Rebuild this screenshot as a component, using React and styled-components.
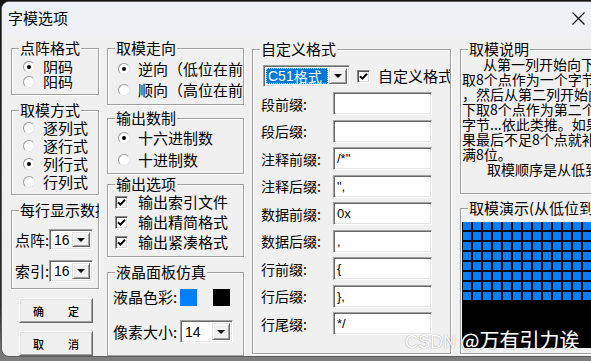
import React from 'react'
import styled, { createGlobalStyle } from 'styled-components'

const GlobalStyle = createGlobalStyle`
  html, body {
    margin: 0;
    padding: 0;
  }
  body {
    background: #1c1c1c;
    font-family: "Noto Sans CJK SC", "Liberation Sans", sans-serif;
    color: #000;
  }
`

const Screen = styled.div`
  position: relative;
  width: 591px;
  height: 361px;
  overflow: hidden;
  box-sizing: border-box;
  padding: 1px 0 0 1px;
  background: linear-gradient(#151515, #2e2e2e 85%, #7d7d7d 99%);
`

const Dialog = styled.div`
  width: 607px;
  height: 356px;
  box-sizing: border-box;
  border: 1px solid #5c5c5c;
  border-radius: 8px;
  background: #f0f0f0;
  overflow: hidden;
  display: flex;
  flex-direction: column;
`

const TitleBar = styled.div`
  height: 31px;
  flex: none;
  display: flex;
  align-items: center;
  padding-left: 6px;
  background: #eef2f7;
  font-size: 15px;
  line-height: 16px;
`

const Caption = styled.div`
  flex: 1;
`

const CloseButton = styled.div`
  width: 58px;
  height: 100%;
  display: flex;
  align-items: center;
  justify-content: center;
  padding-top: 2px;
  box-sizing: border-box;
`

const Body = styled.div`
  flex: 1;
  display: flex;
  padding-left: 9px;
`

const Column = styled.div`
  flex: none;
  width: ${p => p.$w}px;
  margin-left: ${p => p.$ml || 0}px;
  display: flex;
  flex-direction: column;
`

const Group = styled.div`
  box-sizing: border-box;
  flex: none;
  height: ${p => p.$h}px;
  margin-top: ${p => p.$mt}px;
  border: 1px solid #a0a0a0;
  box-shadow: inset 1px 1px 0 #fff, 1px 1px 0 #fff;
`

const Legend = styled.div`
  width: max-content;
  max-width: calc(100% - 8px);
  height: 16px;
  margin: -9px 0 0 7px;
  padding: 0 1px;
  background: #f0f0f0;
  font-size: 15px;
  line-height: 16px;
  white-space: nowrap;
  overflow: hidden;
`

const Options = styled.div`
  flex: none;
  width: ${p => (p.$w ? `${p.$w}px` : 'auto')};
  padding: ${p => p.$pt || 0}px 0 0 ${p => p.$pl}px;
  overflow: hidden;
`

const Option = styled.div`
  display: flex;
  align-items: center;
  gap: ${p => p.$gap || 8}px;
  height: ${p => p.$h}px;
  font-size: 15px;
  line-height: ${p => Math.min(p.$h, 16)}px;
  white-space: nowrap;
  overflow: hidden;
`

const RadioMark = styled.span`
  flex: none;
  width: 12px;
  height: 12px;
  box-sizing: border-box;
  border-radius: 50%;
  border: 1px solid;
  border-color: #9a9a9a #e6e6e6 #e6e6e6 #9a9a9a;
  background: #fff;
  display: flex;
  align-items: center;
  justify-content: center;

  &::after {
    content: '';
    width: 4px;
    height: 4px;
    border-radius: 50%;
    background: ${p => (p.$on ? '#000' : 'transparent')};
  }
`

const CheckMark = styled.span`
  flex: none;
  width: 13px;
  height: 13px;
  box-sizing: border-box;
  border: 1px solid;
  border-color: #8a8a8a #fff #fff #8a8a8a;
  box-shadow: inset 1px 1px 0 #505050, inset -1px -1px 0 #dcdcdc;
  background: #fff;
  display: flex;
  align-items: center;
  justify-content: center;
`

const Row = styled.div`
  display: flex;
  align-items: center;
  height: ${p => p.$h}px;
  margin-top: ${p => p.$mt}px;
  padding-left: ${p => p.$pl}px;
  white-space: nowrap;
  overflow: hidden;
`

const FieldLabel = styled.span`
  flex: none;
  width: ${p => p.$w}px;
  font-size: 15px;
  line-height: 16px;
`

const Combo = styled.div`
  flex: none;
  display: flex;
  box-sizing: border-box;
  width: ${p => p.$w}px;
  height: ${p => p.$h}px;
  padding: 2px;
  border: 1px solid;
  border-color: #a0a0a0 #fff #fff #a0a0a0;
  box-shadow: inset 1px 1px 0 #696969, inset -1px -1px 0 #e3e3e3;
  background: #fff;
`

const ComboValue = styled.div`
  flex: 1;
  display: flex;
  align-items: center;
  padding-left: 2px;
  font: 14px "Liberation Sans", sans-serif;
`

const Selected = styled.div`
  flex: 1;
  display: flex;
  align-items: center;
  padding-left: 2px;
  margin-right: 1px;
  background: #0078d7;
  color: #fff;
  outline: 1px dotted rgba(255, 255, 255, 0.75);
  outline-offset: -1px;
  font-size: 14px;
  line-height: 15px;
`

const DropButton = styled.div`
  flex: none;
  width: 18px;
  box-sizing: border-box;
  border: 1px solid;
  border-color: #e3e3e3 #696969 #696969 #e3e3e3;
  box-shadow: inset 1px 1px 0 #fff, inset -1px -1px 0 #a0a0a0;
  background: #f0f0f0;
  display: flex;
  align-items: center;
  justify-content: center;

  &::after {
    content: '';
    border-left: 4px solid transparent;
    border-right: 4px solid transparent;
    border-top: 4px solid #000;
  }
`

const PushButton = styled.div`
  width: 74px;
  height: 25px;
  box-sizing: border-box;
  margin: ${p => p.$mt}px 0 0 8px;
  padding: 0 13px;
  border: 1px solid;
  border-color: #fff #696969 #696969 #fff;
  box-shadow: inset 1px 1px 0 #e3e3e3, inset -1px -1px 0 #a0a0a0;
  background: #f0f0f0;
  display: flex;
  align-items: center;
  justify-content: space-between;
  font-size: 11px;
  font-weight: 500;
`

const Swatch = styled.span`
  flex: none;
  width: 17px;
  height: 17px;
  margin-right: 16px;
  background: ${p => p.$color};
`

const FormGrid = styled.div`
  display: grid;
  grid-template-columns: 72px 99px;
  grid-auto-rows: 23px;
  row-gap: 4.5px;
  align-items: center;
  margin-top: 5px;
  padding-left: 8px;
`

const AffixLabel = styled.span`
  font-size: 14px;
  line-height: 16px;
  white-space: nowrap;
`

const TextField = styled.div`
  box-sizing: border-box;
  height: 23px;
  padding: 0 3px;
  border: 1px solid;
  border-color: #a0a0a0 #fff #fff #a0a0a0;
  box-shadow: inset 1px 1px 0 #696969, inset -1px -1px 0 #e3e3e3;
  background: #fff;
  display: flex;
  align-items: center;
  font: 13px "Liberation Sans", sans-serif;
`

const Notes = styled.div`
  padding-left: 1px;
  font-size: 14px;
  line-height: 15px;
  white-space: nowrap;
  overflow: hidden;
`

const NoteLine = styled.div`
  height: 15px;
  padding-left: ${p => p.$indent || 0}px;
`

const Lcd = styled.div`
  height: 126px;
  margin: 6px 0 0 1px;
  padding-left: 1px;
  background: #000;
  display: grid;
  grid-template-columns: repeat(14, 8px);
  grid-auto-rows: 8px;
  gap: 2px;
  align-content: start;
  overflow: hidden;
`

const LcdDot = styled.span`
  background: #0080ff;
`

const Watermark = styled.div`
  position: absolute;
  left: 405px;
  top: 329px;
  font-size: 20px;
  line-height: 22px;
  color: #fff;
  text-shadow: 0 0 1px rgba(90, 90, 90, 0.8);
  white-space: nowrap;
`

const Latin = styled.span`
  font-family: "Liberation Sans", sans-serif;
`

const WaterLatin = styled(Latin)`
  font-size: 18px;
`

const Radio = ({ on, h, children }) => (
  <Option $h={h}>
    <RadioMark $on={on} />
    {children}
  </Option>
)

const Check = ({ h, gap, children }) => (
  <Option $h={h} $gap={gap}>
    <CheckMark>
      <svg width="9" height="9" viewBox="0 0 9 9">
        <path d="M1 4.2 L3.4 6.6 L8 1.8" fill="none" stroke="#000" strokeWidth="2" />
      </svg>
    </CheckMark>
    {children}
  </Option>
)

const affixes = [
  ['段前缀:', ''],
  ['段后缀:', ''],
  ['注释前缀:', '/*"'],
  ['注释后缀:', '",'],
  ['数据前缀:', '0x'],
  ['数据后缀:', ','],
  ['行前缀:', '{'],
  ['行后缀:', '},'],
  ['行尾缀:', '*/']
]

const notes = [
  ['从第一列开始向下取8个', 21],
  ['取8个点作为一个字节，', 0],
  ['，然后从第二列开始向下', 0],
  ['下取8个点作为第二个字', 0],
  ['字节...依此类推。如果', 0],
  ['果最后不足8个点就补满', 0],
  ['满8位。', 0],
  ['取模顺序是从低到高，', 25]
]

const dots = Array.from({ length: 8 * 14 })

export default function App () {
  return (
    <Screen>
      <GlobalStyle />
      <Dialog>
        <TitleBar>
          <Caption>字模选项</Caption>
          <CloseButton>
            <svg width="13" height="13" viewBox="0 0 13 13">
              <path d="M0.5 0.5 L12.5 12.5 M12.5 0.5 L0.5 12.5" stroke="#000" strokeWidth="1.1" />
            </svg>
          </CloseButton>
        </TitleBar>
        <Body>
          <Column $w={88}>
            <Group $mt={15} $h={47}>
              <Legend>点阵格式</Legend>
              <Options $pt={3} $pl={11}>
                <Radio h={15} on>阴码</Radio>
                <Radio h={15}>阳码</Radio>
              </Options>
            </Group>
            <Group $mt={15} $h={85}>
              <Legend>取模方式</Legend>
              <Options $pt={1} $pl={11}>
                <Radio h={18}>逐列式</Radio>
                <Radio h={18}>逐行式</Radio>
                <Radio h={18} on>列行式</Radio>
                <Radio h={18}>行列式</Radio>
              </Options>
            </Group>
            <Group $mt={15} $h={79}>
              <Legend>每行显示数据</Legend>
              <Row $mt={11} $h={21} $pl={3}>
                <FieldLabel $w={34}>点阵:</FieldLabel>
                <Combo $w={44} $h={21}>
                  <ComboValue>16</ComboValue>
                  <DropButton />
                </Combo>
              </Row>
              <Row $mt={10} $h={22} $pl={3}>
                <FieldLabel $w={34}>索引:</FieldLabel>
                <Combo $w={44} $h={22}>
                  <ComboValue>16</ComboValue>
                  <DropButton />
                </Combo>
              </Row>
            </Group>
            <PushButton $mt={9}><span>确</span><span>定</span></PushButton>
            <PushButton $mt={8}><span>取</span><span>消</span></PushButton>
          </Column>

          <Column $w={137} $ml={8}>
            <Group $mt={15} $h={57}>
              <Legend>取模走向</Legend>
              <Options $pt={2} $pl={10}>
                <Radio h={21} on>逆向（低位在前）</Radio>
                <Radio h={21}>顺向（高位在前）</Radio>
              </Options>
            </Group>
            <Group $mt={13} $h={56}>
              <Legend>输出数制</Legend>
              <Options $pt={1} $pl={10}>
                <Radio h={22} on>十六进制数</Radio>
                <Radio h={22}>十进制数</Radio>
              </Options>
            </Group>
            <Group $mt={10} $h={73}>
              <Legend>输出选项</Legend>
              <Options $pl={7} $w={113}>
                <Check h={20} gap={10}>输出索引文件</Check>
                <Check h={20} gap={10}>输出精简格式</Check>
                <Check h={20} gap={10}>输出紧凑格式</Check>
              </Options>
            </Group>
            <Group $mt={15} $h={84}>
              <Legend>液晶面板仿真</Legend>
              <Row $mt={8} $h={18} $pl={5}>
                <FieldLabel $w={67}>液晶色彩:</FieldLabel>
                <Swatch $color="#0080ff" />
                <Swatch $color="#000" />
              </Row>
              <Row $mt={14} $h={23} $pl={5}>
                <FieldLabel $w={67}>像素大小:</FieldLabel>
                <Combo $w={53} $h={23}>
                  <ComboValue>14</ComboValue>
                  <DropButton />
                </Combo>
              </Row>
            </Group>
          </Column>

          <Column $w={199} $ml={8}>
            <Group $mt={16} $h={305}>
              <Legend>自定义格式</Legend>
              <Row $mt={8} $h={22} $pl={10}>
                <Combo $w={87} $h={22}>
                  <Selected><Latin>C51</Latin>格式</Selected>
                  <DropButton />
                </Combo>
                <Options $pl={7} $w={95}>
                  <Check h={22} gap={8}>自定义格式</Check>
                </Options>
              </Row>
              <FormGrid>
                {affixes.map(([label, value]) => (
                  <React.Fragment key={label}>
                    <AffixLabel>{label}</AffixLabel>
                    <TextField>{value}</TextField>
                  </React.Fragment>
                ))}
              </FormGrid>
            </Group>
          </Column>

          <Column $w={160} $ml={9}>
            <Group $mt={16} $h={145}>
              <Legend>取模说明</Legend>
              <Notes>
                {notes.map(([text, indent]) => (
                  <NoteLine key={text} $indent={indent}>{text}</NoteLine>
                ))}
              </Notes>
            </Group>
            <Group $mt={14} $h={146}>
              <Legend>取模演示(从低位到高位)</Legend>
              <Lcd>
                {dots.map((_, i) => <LcdDot key={i} />)}
              </Lcd>
            </Group>
          </Column>
        </Body>
      </Dialog>
      <Watermark><WaterLatin>CSDN</WaterLatin> @万有引力诶</Watermark>
    </Screen>
  )
}
